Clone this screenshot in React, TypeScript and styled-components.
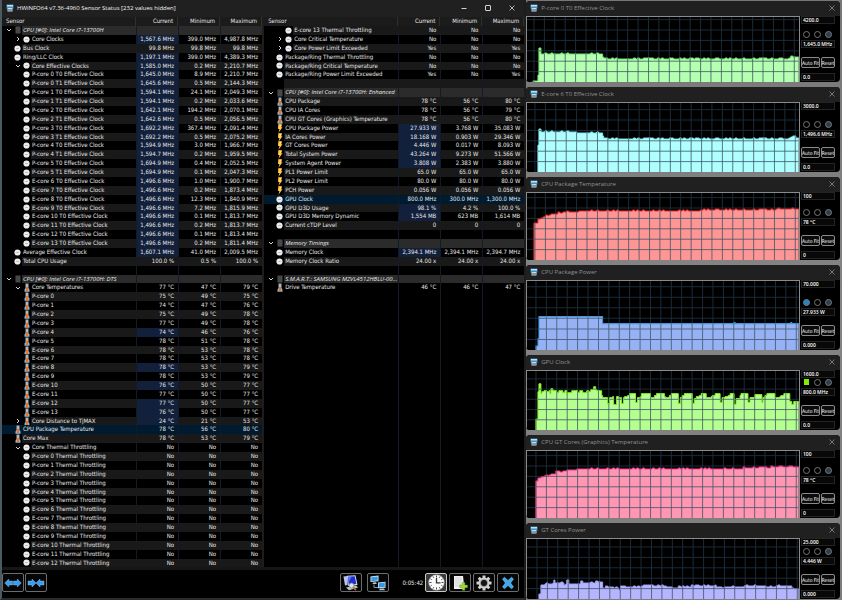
import React from "react";
import styled, { createGlobalStyle } from "styled-components";

const GlobalStyle = createGlobalStyle`
  * { box-sizing: border-box; }
  html, body { margin: 0; padding: 0; background: #4b565e; }
  body, button, input { font-family: "DejaVu Sans Condensed", "Liberation Sans", sans-serif; font-size: 6px; }
  button, input { margin: 0; }
`;

/* ---------- layout ---------- */

const Desktop = styled.main`
  display: grid;
  grid-template-columns: minmax(0, 5fr) minmax(0, 3fr);
  height: 100vh;
  min-height: 560px;
  background: #4b565e;
`;

const SensorWindow = styled.section`
  display: flex;
  flex-direction: column;
  min-width: 0;
  background: #000;
  border-left: 2px solid #4b5963;
  border-right: 2px solid #1c1c1c;
  border-bottom: 2px solid #292b2d;
`;

const TitleBar = styled.header`
  display: flex;
  align-items: center;
  flex: none;
  height: 17px;
  padding: 0 0 1px 4px;
  background: #202020;
  color: #f2f2f2;
`;

const Title = styled.h1<{ $dim?: boolean }>`
  flex: 1;
  margin: 0;
  padding-left: 3px;
  font-family: "Open Sans", "Noto Sans", sans-serif;
  font-size: 6px;
  font-weight: 400;
  line-height: 10px;
  white-space: nowrap;
  color: ${(p) => (p.$dim ? "#929292" : "#f4f4f4")};
`;

const CaptionButton = styled.button`
  display: flex;
  align-items: center;
  justify-content: center;
  width: 24px;
  height: 12px;
  padding: 0;
  border: 0;
  background: none;
  color: #d0d0d0;
`;

const Columns = styled.div`
  display: grid;
  grid-template-columns: minmax(0, 1fr) minmax(0, 1fr);
  column-gap: 2px;
  flex: 1;
  min-height: 0;
  background: #1d1d1d;
`;

/* ---------- sensor table ---------- */

const Table = styled.table`
  display: flex;
  flex-direction: column;
  min-width: 0;
  background: #000;
  color: #e8e8e8;
  font-size: 6px;
  line-height: 8px;
`;

const Head = styled.thead`
  display: block;
  flex: none;
  height: 9px;
  background: #1b1b1b;
`;

const Body = styled.tbody`
  display: flex;
  flex-direction: column;
  flex: 1;
  min-height: 0;
`;

const Row = styled.tr<{ $selected?: boolean; $span?: number }>`
  display: grid;
  grid-template-columns: minmax(0, 1fr) 42px 42px 42px;
  flex: ${(p) => p.$span ?? 1} 1 0;
  min-height: 0;
  background: ${(p) => (p.$selected ? "#001b30" : "#000")};
`;

type Tone = "plain" | "stripe" | "group" | "selected" | "changed";
const toneColor: Record<Tone, string> = {
  plain: "#000",
  stripe: "#191919",
  group: "#2b2b2b",
  selected: "#001b30",
  changed: "#13203b",
};

const HeadCell = styled.th<{ $first?: boolean }>`
  padding: 0 4px;
  font-weight: 400;
  line-height: 8px;
  text-align: ${(p) => (p.$first ? "left" : "right")};
  border-right: 1px solid #303030;
`;

const HeadRow = styled(Row)`
  height: 9px;
  background: #1b1b1b;
`;

const NameCell = styled.th<{ $depth: number }>`
  display: flex;
  min-width: 0;
  height: 100%;
  padding: 0 0 0 ${(p) => 2 + p.$depth * 9}px;
  font-weight: 400;
  text-align: left;
`;

const Slot = styled.span`
  display: flex;
  align-items: center;
  justify-content: center;
  flex: none;
  width: 9px;
`;

const Toggle = styled.button`
  display: flex;
  align-items: center;
  justify-content: center;
  width: 8px;
  height: 8px;
  padding: 0;
  border: 0;
  background: none;
  color: #d8d8d8;
`;

const Label = styled.span<{ $tone: Tone }>`
  flex: 1;
  min-width: 0;
  padding-left: 1px;
  white-space: nowrap;
  background: ${(p) => toneColor[p.$tone]};
`;

const GroupLabel = styled(Label)`
  font-family: "Open Sans", "Noto Sans", sans-serif;
  font-style: italic;
`;

const ValueCell = styled.td<{ $tone: Tone }>`
  padding: 0 4px 0 0;
  text-align: right;
  white-space: nowrap;
  border-left: 1px solid #121b26;
  background: ${(p) => toneColor[p.$tone]};
`;

/* ---------- toolbar ---------- */

const Toolbar = styled.footer`
  display: flex;
  align-items: center;
  flex: none;
  height: 31px;
  padding: 0 5px 3px 0;
  gap: 2px;
  border-top: 3px solid #161616;
`;

const ColumnTools = styled.div`
  display: flex;
  gap: 1px;
`;

const ToolButton = styled.button<{ $active?: boolean }>`
  display: flex;
  align-items: center;
  justify-content: center;
  width: 22px;
  height: 19px;
  padding: 0;
  border: 1px solid ${(p) => (p.$active ? "#c8c8c8" : "#6c6c6c")};
  border-radius: 2px;
  background: ${(p) => (p.$active ? "#3a3a3a" : "#060606")};
`;

const WindowTools = styled.div`
  display: flex;
  gap: 5px;
  margin-left: auto;
`;

const Elapsed = styled.time`
  width: 32px;
  text-align: right;
  color: #ececec;
`;

/* ---------- graph windows ---------- */

const GraphColumn = styled.aside`
  display: flex;
  flex-direction: column;
  gap: 5px;
  min-width: 0;
  padding: 1px 2px 1px 0;
  background: linear-gradient(#777 0, #858585 50%, #7d7d7d 100%);
`;

const GraphWindow = styled.section<{ $share: number }>`
  display: flex;
  flex-direction: column;
  flex: ${(p) => p.$share} 1 0;
  min-height: 0;
  border-radius: 4px;
  overflow: hidden;
  background: #000;
`;

const GraphTitle = styled.header`
  display: flex;
  align-items: center;
  flex: none;
  height: 15px;
  padding: 0 0 1px 4px;
  background: #202020;
`;

const GraphClose = styled(CaptionButton)`
  width: 16px;
  color: #8d8d8d;
`;

const GraphBody = styled.div`
  display: flex;
  flex: 1;
  min-height: 0;
`;

const Plot = styled.svg`
  display: block;
  flex: 1;
  min-width: 0;
  height: 100%;
  border: 1px solid #8a8a8a;
  border-width: 1px 1px 0 1px;
  background: #000;
`;

const Panel = styled.div`
  display: flex;
  flex-direction: column;
  flex: none;
  width: 40px;
  padding: 0 4px 1px 1px;
`;

const Field = styled.input`
  flex: none;
  width: 34px;
  height: 8px;
  padding: 0 1px;
  border: 1px solid #242424;
  border-radius: 0;
  background: #080808;
  color: #fff;
  font-family: "Open Sans", "Noto Sans", sans-serif;
  font-size: 5px;
  font-weight: 600;
  line-height: 6px;
`;

const Radios = styled.div`
  display: flex;
  gap: 4px;
  margin: auto 0 2px;
  padding-left: 2px;
  height: 7px;
`;

const Radio = styled.input<{ $fill: string; $square?: boolean }>`
  appearance: none;
  width: ${(p) => (p.$square ? 5 : 7)}px;
  height: ${(p) => (p.$square ? 6 : 7)}px;
  margin: 0 ${(p) => (p.$square ? 1 : 0)}px;
  border: 1px solid ${(p) => (p.$square ? p.$fill : "#777")};
  border-radius: ${(p) => (p.$square ? "0" : "50%")};
  background: ${(p) => p.$fill};
`;

const Actions = styled.div`
  display: flex;
  flex: none;
  gap: 1px;
  margin: 9px 0 5px;
`;

const Action = styled.button<{ $wide?: boolean }>`
  flex: none;
  display: flex;
  align-items: center;
  justify-content: center;
  width: ${(p) => (p.$wide ? 19 : 14)}px;
  height: 11px;
  padding: 0;
  border: 1px solid #8a8a8a;
  border-radius: 2px;
  background: #0c0c0c;
  color: #fff;
  font-size: 5px;
  line-height: 8px;
  white-space: nowrap;
`;

/* ---------- icons ---------- */

const AppIcon = () => (
  <svg width="8" height="8" viewBox="0 0 16 16" aria-hidden="true">
    <path d="M1 1h14v8H1z" fill="#3d8fc4" />
    <path d="M2 2h12v3H2z" fill="#bfe3f5" />
    <path d="M3 8h10v7H3z" fill="#c9dbe6" />
    <path d="M5 10h2v4H5zM9 10h2v4H9z" fill="#36586e" />
  </svg>
);

const CloseIcon = () => (
  <svg width="6" height="6" viewBox="0 0 6 6" stroke="currentColor" strokeWidth="0.8" aria-hidden="true">
    <path d="M0.5 0.5l5 5M5.5 0.5l-5 5" />
  </svg>
);

const Chevron = ({ open }: { open: boolean }) => (
  <svg width="6" height="6" viewBox="0 0 6 6" fill="none" stroke="currentColor" strokeWidth="1" aria-hidden="true">
    <path d={open ? "M1 2l2 2 2-2" : "M2 1l2 2-2 2"} />
  </svg>
);

type IconKind = "dial" | "temp" | "bolt" | "chip";

const SensorIcon = ({ kind }: { kind: IconKind }) => {
  if (kind === "temp")
    return (
      <svg width="6" height="9" viewBox="0 0 6 9" aria-hidden="true">
        <path d="M1.500 0.500h3v4.500l1 1.400v2.400H0.500V6.400l1-1.400z" fill="#8fb4cc" />
        <path d="M2.500 1.500h1v5h-1z" fill="#f6b48a" />
        <path d="M2 4h2v4h-2z" fill="#f2701c" />
      </svg>
    );
  if (kind === "bolt")
    return (
      <svg width="6" height="9" viewBox="0 0 6 9" aria-hidden="true">
        <path d="M1.200 0.300h4L4.300 3.300h1.200L1.500 8.800l0.900-3.900H1z" fill="#ffb52e" />
        <path d="M2.200 1h1.500L2.600 4.400l1 0.200" fill="none" stroke="#fff3b0" strokeWidth="0.800" />
      </svg>
    );
  if (kind === "chip")
    return (
      <svg width="6" height="8" viewBox="0 0 6 8" aria-hidden="true">
        <rect x="0.500" y="0.500" width="5" height="7" fill="#4c4c4c" />
        <path d="M0.500 2h5M0.500 4h5M0.500 6h5" stroke="#3a3a3a" strokeWidth="0.500" />
      </svg>
    );
  return (
    <svg width="7" height="7" viewBox="0 0 7 7" aria-hidden="true">
      <circle cx="3.500" cy="3.500" r="3.100" fill="#ededed" />
      <path d="M2.200 3.500h2.600" stroke="#a4a4a4" strokeWidth="0.700" />
    </svg>
  );
};

const ExpandIcon = ({ inward }: { inward?: boolean }) => (
  <svg width="18" height="10" viewBox="0 0 18 10" fill="#3b9df0" stroke="#9bd0ff" strokeWidth="0.400" aria-hidden="true">
    {inward ? (
      <path d="M9 5L5 1v2H1v4h4v2zM9 5l4-4v2h4v4h-4v2z" />
    ) : (
      <path d="M0.700 5l4-4v2h3.800v4H4.700v2zM17.300 5l-4-4v2H9.500v4h3.800v2z" />
    )}
  </svg>
);

const MonitorIcon = () => (
  <svg width="16" height="16" viewBox="0 0 16 16" aria-hidden="true">
    <path d="M0.500 1.500l4-0.500v9l-2.500 0.500z" fill="#b9c3f2" />
    <path d="M4 0.800l8.500-0.500 2 9.700-9.500 1z" fill="#d7dcf2" />
    <path d="M5 1.800l6.700-0.500 1.600 7.700-7.600 0.800z" fill="#1d2fd0" />
    <path d="M5 1.800l3.500-0.300L6 7z" fill="#5a7bf5" />
    <path d="M3 12.500l10-2 2 2-9 2.800z" fill="#c4c8cc" />
    <circle cx="8.500" cy="10.500" r="2.500" fill="#d6e6f2" stroke="#8a7a68" strokeWidth="0.700" />
    <path d="M10.200 12.400l2.800 2.800" stroke="#a8703c" strokeWidth="1.700" />
  </svg>
);

const NetworkIcon = () => (
  <svg width="16" height="16" viewBox="0 0 16 16" aria-hidden="true">
    <path d="M0.500 1.500l8-1v5.800l-8 0.700z" fill="#dcebf5" />
    <path d="M1.300 2.200l6.400-0.800v4.200l-6.400 0.600z" fill="#2f9ae8" />
    <path d="M3 7.500l3-0.300 0.800 1.800H2.500z" fill="#b8c4cc" />
    <path d="M4 9.500v3h4" fill="none" stroke="#8fa3b0" strokeWidth="0.900" />
    <path d="M8 7.500l7.500-0.800v6l-7.500 0.600z" fill="#dcebf5" />
    <path d="M8.700 8.200l6.100-0.700v4.400l-6.100 0.500z" fill="#2f9ae8" />
    <path d="M10 13.500h4l1 1.800H9z" fill="#b8c4cc" />
  </svg>
);

const ClockIcon = () => (
  <svg width="17" height="17" viewBox="0 0 17 17" aria-hidden="true">
    <circle cx="8.500" cy="8.500" r="7.800" fill="#fafafa" stroke="#b0b0b0" strokeWidth="0.500" />
    <g stroke="#333" strokeWidth="0.900">
      <path d="M8.500 1.500v2M8.500 13.500v2M1.500 8.500h2M13.500 8.500h2M5 2.500l0.800 1.300M12 2.500l-0.800 1.300M5 14.500l0.800-1.300M12 14.500l-0.800-1.300M2.500 5l1.200 0.700M14.500 5l-1.200 0.700M2.500 12l1.200-0.700M14.500 12l-1.200-0.700" />
      <path d="M8.500 4v4.800h4" fill="none" strokeWidth="1.300" />
    </g>
  </svg>
);

const LogIcon = () => (
  <svg width="16" height="16" viewBox="0 0 16 16" aria-hidden="true">
    <path d="M2 1h9l1.500 13H2z" fill="#f2f2f2" />
    <path d="M3 3h7M3 5h7M3 7h7M3 9h7M3 11h7" stroke="#b8b8b8" strokeWidth="0.600" />
    <path d="M10.300 7.500h2.600v2.600h2.600v2.600h-2.600v2.600h-2.600v-2.600H7.700v-2.600h2.600z" fill="#9ed63c" stroke="#5b8f1a" strokeWidth="0.400" />
  </svg>
);

const GearIcon = () => (
  <svg width="16" height="16" viewBox="0 0 16 16" aria-hidden="true">
    <g stroke="#d2d2d2" strokeWidth="3">
      <path d="M8 0.500v15M0.500 8h15M2.700 2.700l10.600 10.600M13.300 2.700L2.700 13.300" />
    </g>
    <circle cx="8" cy="8" r="5.500" fill="#d2d2d2" />
    <circle cx="8" cy="8" r="3.200" fill="#151515" />
    <circle cx="8" cy="8" r="3.700" fill="none" stroke="#8f8f8f" strokeWidth="0.700" />
  </svg>
);

const QuitIcon = () => (
  <svg width="14" height="14" viewBox="0 0 14 14" aria-hidden="true">
    <path d="M1.500 3l2-1.700L7 4.500l3.500-3.200 2 1.700L9.600 7l2.900 4-2 1.700L7 9.500l-3.500 3.200-2-1.700L4.400 7z" fill="#3fa9ea" stroke="#93d3fb" strokeWidth="0.500" />
  </svg>
);

/* ---------- sensor data ---------- */

interface Sensor {
  name: string;
  icon?: IconKind;
  depth?: number;
  fold?: "open" | "closed";
  group?: boolean;
  selected?: boolean;
  changed?: boolean;
  values?: string[];
}

const group = (name: string): Sensor => ({ name, icon: "chip", fold: "open", group: true });
const blank: Sensor = { name: "" };
const reading = (name: string, icon: IconKind, values: string, unit: string, extra: Partial<Sensor> = {}): Sensor => ({
  name,
  icon,
  values: values.split(" ").map((v) => (unit ? `${v} ${unit}` : v)),
  ...extra,
});

const effective = (
  [
    ["P-core 0 T0", "1,645.0 8.9 2,210.7"],
    ["P-core 0 T1", "1,645.6 0.5 2,144.3"],
    ["P-core 1 T0", "1,594.1 24.1 2,049.3"],
    ["P-core 1 T1", "1,594.1 0.2 2,033.6"],
    ["P-core 2 T0", "1,642.1 194.2 2,070.1"],
    ["P-core 2 T1", "1,642.6 0.5 2,056.5"],
    ["P-core 3 T0", "1,692.2 367.4 2,091.4"],
    ["P-core 3 T1", "1,692.2 0.5 2,075.2"],
    ["P-core 4 T0", "1,594.9 3.0 1,966.7"],
    ["P-core 4 T1", "1,594.7 0.2 1,959.5"],
    ["P-core 5 T0", "1,694.9 0.4 2,052.5"],
    ["P-core 5 T1", "1,694.9 0.1 2,047.3"],
    ["E-core 6 T0", "1,496.6 1.0 1,900.7"],
    ["E-core 7 T0", "1,496.6 0.2 1,873.4"],
    ["E-core 8 T0", "1,496.6 12.3 1,840.9"],
    ["E-core 9 T0", "1,496.6 7.2 1,815.9"],
    ["E-core 10 T0", "1,496.6 0.1 1,813.7"],
    ["E-core 11 T0", "1,496.6 0.2 1,813.7"],
    ["E-core 12 T0", "1,496.6 0.1 1,813.4"],
    ["E-core 13 T0", "1,496.6 0.2 1,811.4"],
  ] as const
).map(([core, v]) => reading(`${core} Effective Clock`, "dial", v, "MHz", { depth: 1, changed: true }));

const temperatures = (
  [
    ["P-core 0", "75 49 75"],
    ["P-core 1", "74 47 76"],
    ["P-core 2", "75 49 78"],
    ["P-core 3", "77 49 78"],
    ["P-core 4", "74 46 76", true],
    ["P-core 5", "78 51 78"],
    ["E-core 6", "78 53 78"],
    ["E-core 7", "78 53 78"],
    ["E-core 8", "78 53 79", true],
    ["E-core 9", "78 53 79"],
    ["E-core 10", "76 50 77", true],
    ["E-core 11", "77 50 77"],
    ["E-core 12", "77 50 77", true],
    ["E-core 13", "76 50 77", true],
  ] as [string, string, boolean?][]
).map(([core, v, changed]) => reading(core, "temp", v, "°C", { depth: 1, changed }));

const throttling = Array.from({ length: 13 }, (_, i) =>
  reading(`${i < 6 ? "P" : "E"}-core ${i} Thermal Throttling`, "dial", "No No No", "", { depth: 1 })
);

const leftSensors: Sensor[] = [
  group("CPU [#0]: Intel Core i7-13700H"),
  reading("Core Clocks", "dial", "1,567.6 399.0 4,987.8", "MHz", { depth: 1, fold: "closed", changed: true }),
  reading("Bus Clock", "dial", "99.8 99.8 99.8", "MHz"),
  reading("Ring/LLC Clock", "dial", "1,197.1 399.0 4,389.3", "MHz", { changed: true }),
  reading("Core Effective Clocks", "dial", "1,585.0 0.2 2,210.7", "MHz", { depth: 1, fold: "open", changed: true }),
  ...effective,
  reading("Average Effective Clock", "dial", "1,607.1 41.0 2,009.5", "MHz", { changed: true }),
  reading("Total CPU Usage", "dial", "100.0 0.5 100.0", "%"),
  blank,
  group("CPU [#0]: Intel Core i7-13700H: DTS"),
  reading("Core Temperatures", "temp", "77 47 79", "°C", { depth: 1, fold: "open" }),
  ...temperatures,
  reading("Core Distance to TjMAX", "temp", "24 21 53", "°C", { depth: 1, fold: "closed", changed: true }),
  reading("CPU Package Temperature", "temp", "78 56 80", "°C", { selected: true }),
  reading("Core Max", "temp", "78 53 79", "°C"),
  reading("Core Thermal Throttling", "dial", "No No No", "", { depth: 1, fold: "open" }),
  ...throttling,
];

const rightSensors: Sensor[] = [
  reading("E-core 13 Thermal Throttling", "dial", "No No No", "", { depth: 1 }),
  reading("Core Critical Temperature", "dial", "No No No", "", { depth: 1, fold: "closed" }),
  reading("Core Power Limit Exceeded", "dial", "Yes No Yes", "", { depth: 1, fold: "closed" }),
  reading("Package/Ring Thermal Throttling", "dial", "No No No", ""),
  reading("Package/Ring Critical Temperature", "dial", "No No No", ""),
  reading("Package/Ring Power Limit Exceeded", "dial", "Yes No Yes", ""),
  blank,
  group("CPU [#0]: Intel Core i7-13700H: Enhanced"),
  reading("CPU Package", "temp", "78 56 80", "°C"),
  reading("CPU IA Cores", "temp", "78 56 79", "°C"),
  reading("CPU GT Cores (Graphics) Temperature", "temp", "78 56 80", "°C"),
  reading("CPU Package Power", "bolt", "27.933 3.768 35.083", "W", { changed: true }),
  reading("IA Cores Power", "bolt", "18.168 0.903 29.346", "W", { changed: true }),
  reading("GT Cores Power", "bolt", "4.446 0.017 8.093", "W", { changed: true }),
  reading("Total System Power", "bolt", "43.264 9.273 51.566", "W", { changed: true }),
  reading("System Agent Power", "bolt", "3.808 2.383 3.880", "W", { changed: true }),
  reading("PL1 Power Limit", "bolt", "65.0 65.0 65.0", "W"),
  reading("PL2 Power Limit", "bolt", "80.0 80.0 80.0", "W"),
  reading("PCH Power", "bolt", "0.056 0.056 0.056", "W"),
  reading("GPU Clock", "dial", "800.0 300.0 1,300.0", "MHz", { selected: true }),
  reading("GPU D3D Usage", "dial", "98.1 4.2 100.0", "%", { changed: true }),
  reading("GPU D3D Memory Dynamic", "dial", "1,554 623 1,614", "MB", { changed: true }),
  reading("Current cTDP Level", "dial", "0 0 0", ""),
  blank,
  group("Memory Timings"),
  reading("Memory Clock", "dial", "2,394.1 2,394.1 2,394.7", "MHz", { changed: true }),
  reading("Memory Clock Ratio", "dial", "24.00 24.00 24.00", "x"),
  blank,
  group("S.M.A.R.T.: SAMSUNG MZVL4512HBLU-00..."),
  reading("Drive Temperature", "temp", "46 46 47", "°C"),
];

const SensorTable = ({ sensors, rows, label }: { sensors: Sensor[]; rows: number; label: string }) => (
  <Table aria-label={label}>
    <Head>
      <HeadRow>
        <HeadCell $first>Sensor</HeadCell>
        <HeadCell>Current</HeadCell>
        <HeadCell>Minimum</HeadCell>
        <HeadCell>Maximum</HeadCell>
      </HeadRow>
    </Head>
    <Body>
      {sensors.map((s, i) => {
        const tone: Tone = s.selected ? "selected" : s.group ? "group" : i % 2 === 0 ? "stripe" : "plain";
        const values = s.values ?? ["", "", ""];
        const Name = s.group ? GroupLabel : Label;
        return (
          <Row key={i} $selected={s.selected}>
            <NameCell $depth={s.depth ?? 0} scope="row">
              <Slot>
                {s.fold && (
                  <Toggle aria-label={`Toggle ${s.name}`} aria-expanded={s.fold === "open"}>
                    <Chevron open={s.fold === "open"} />
                  </Toggle>
                )}
              </Slot>
              <Slot>{s.icon && <SensorIcon kind={s.icon} />}</Slot>
              <Name $tone={tone}>{s.name}</Name>
            </NameCell>
            {values.map((v, c) => (
              <ValueCell key={c} $tone={c === 0 && s.changed ? "changed" : tone}>
                {v}
              </ValueCell>
            ))}
          </Row>
        );
      })}
      {rows > sensors.length && (
        <Row $span={rows - sensors.length}>
          <NameCell $depth={0} />
          <ValueCell $tone="plain" />
          <ValueCell $tone="plain" />
          <ValueCell $tone="plain" />
        </Row>
      )}
    </Body>
  </Table>
);

/* ---------- graph data ---------- */

interface Graph {
  title: string;
  share: number;
  height: number;
  max: string;
  now: string;
  min: string;
  fill: string;
  edge: string;
  offset: number;
  bumps: number;
  swatch?: string;
  square?: boolean;
  steps: [number, number][];
}

const PLOT_WIDTH = 273;

const graphs: Graph[] = [
  {
    title: "P-core 0 T0 Effective Clock", share: 81, height: 65, max: "4200.0", now: "1,645.0 MHz", min: "0.0",
    fill: "#b4ffb0", edge: "#6fe86c", offset: 7, bumps: 1,
    steps: [[6, 1], [11, 7], [12, 34], [14, 28], [76, 25], [77, 23], [265, 25]],
  },
  {
    title: "E-core 6 T0 Effective Clock", share: 85, height: 69, max: "3000.0", now: "1,496.6 MHz", min: "0.0",
    fill: "#b0ffff", edge: "#7fe6ea", offset: 8, bumps: 1,
    steps: [[11, 27], [12, 43], [14, 40], [50, 39], [76, 36], [77, 33], [265, 34], [267, 36], [270, 34]],
  },
  {
    title: "CPU Package Temperature", share: 83, height: 67, max: "100", now: "78 °C", min: "0",
    fill: "#ff9696", edge: "#f02a2a", offset: 8, bumps: 1,
    steps: [[7, 37], [11, 41], [14, 42], [16, 43], [19, 44], [22, 45], [26, 46], [31, 47], [36, 48], [52, 49], [175, 50], [250, 51]],
  },
  {
    title: "CPU Package Power", share: 85, height: 68, max: "70.000", now: "27.933 W", min: "0.000",
    fill: "#96b2f5", edge: "#3f97dc", offset: 9, bumps: 0, swatch: "#1b87cc",
    steps: [[9, 4], [11, 11], [12, 33], [76, 26], [208, 27], [209, 26], [265, 27], [266, 26]],
  },
  {
    title: "GPU Clock", share: 75, height: 60, max: "1600.0", now: "800.0 MHz", min: "0.0",
    fill: "#b4ff90", edge: "#86f41c", offset: 9, bumps: 0, swatch: "#7ff000", square: true,
    steps: [
      [9, 11], [11, 39], [12, 47], [14, 37], [15, 39], [17, 40], [20, 39], [22, 40], [23, 37], [24, 42], [26, 40], [30, 38], [32, 40],
      [36, 38], [38, 40], [40, 36], [41, 38], [45, 40], [51, 38], [53, 40], [56, 38], [60, 40], [62, 39], [64, 41], [67, 44], [69, 41],
      [70, 40], [75, 35], [76, 33], [81, 27], [83, 33], [86, 34], [87, 26], [90, 34], [92, 33], [95, 27], [97, 33], [98, 34], [101, 35],
      [103, 37], [109, 28], [111, 33], [114, 34], [115, 37], [124, 33], [128, 35], [130, 37], [138, 34], [139, 33], [143, 35], [145, 37],
      [152, 27], [154, 33], [156, 35], [158, 37], [166, 27], [168, 32], [170, 34], [173, 35], [175, 37], [180, 33], [185, 34], [186, 35],
      [189, 37], [194, 28], [196, 33], [199, 34], [202, 35], [204, 37], [208, 26], [210, 32], [214, 35], [215, 37], [222, 28], [224, 33],
      [229, 36], [236, 28], [237, 33], [239, 35], [241, 37], [249, 33], [254, 34], [255, 35], [258, 37], [264, 29], [266, 26], [268, 29],
    ],
  },
  {
    title: "CPU GT Cores (Graphics) Temperature", share: 83, height: 67, max: "100", now: "78 °C", min: "0",
    fill: "#ff96b4", edge: "#ff3b90", offset: 9, bumps: 1,
    steps: [[9, 37], [11, 40], [14, 41], [17, 42], [22, 43], [26, 44], [29, 46], [36, 47], [42, 48], [50, 49], [170, 49], [217, 50], [245, 51]],
  },
  {
    title: "GT Cores Power", share: 76, height: 60, max: "25.000", now: "4.446 W", min: "0.000",
    fill: "#b4b4ff", edge: "#a4a4fa", offset: 10, bumps: 1,
    steps: [
      [12, 5], [14, 14], [19, 15], [26, 16], [27, 18], [28, 16], [37, 14], [40, 18], [42, 15], [54, 18], [56, 16], [69, 18], [71, 16],
      [76, 11], [79, 12], [85, 11], [92, 9], [94, 13], [99, 12], [115, 13], [140, 12], [146, 11], [152, 12], [165, 13], [190, 12],
      [196, 11], [200, 12], [218, 13], [240, 12], [250, 13], [266, 10],
    ],
  },
];

const outline = ({ steps, height, bumps }: Graph) => {
  let d = `M${steps[0][0]} ${height}`;
  steps.forEach(([x, h], i) => {
    const end = i + 1 < steps.length ? steps[i + 1][0] : PLOT_WIDTH;
    for (let at = x; at < end; at += 2) {
      const noisy = bumps > 0 && at > 16 && (at * 7 + ((at * at) % 23) * 5) % 19 < 5;
      d += `V${height - h - (noisy ? bumps : 0)}H${Math.min(at + 2, end)}`;
    }
  });
  return d;
};

const gridLines = ({ offset, height }: Graph) => {
  let d = "";
  for (let k = 0; offset + k * 10.46 < PLOT_WIDTH; k++) d += `M${(offset + k * 10.46).toFixed(1)} 0V${height}`;
  for (let k = 1; height - k * 10.4 > 0; k++) d += `M0 ${(height - k * 10.4).toFixed(1)}H${PLOT_WIDTH}`;
  return d;
};

const GraphView = ({ graph }: { graph: Graph }) => {
  const line = outline(graph);
  const grid = gridLines(graph);
  const clip = `area-${graph.title.replace(/\W/g, "")}`;
  return (
    <GraphWindow $share={graph.share} aria-label={graph.title}>
      <GraphTitle>
        <AppIcon />
        <Title as="h2" $dim>
          {graph.title}
        </Title>
        <GraphClose aria-label="Close graph">
          <CloseIcon />
        </GraphClose>
      </GraphTitle>
      <GraphBody>
        <Plot viewBox={`0 0 ${PLOT_WIDTH} ${graph.height}`} preserveAspectRatio="none" role="img" aria-label={`${graph.title} graph`}>
          <clipPath id={clip}>
            <path d={`${line}V${graph.height}Z`} />
          </clipPath>
          <path d={grid} stroke="#1b2b38" fill="none" />
          <path d={`${line}V${graph.height}Z`} fill={graph.fill} />
          <path d={line} fill="none" stroke={graph.edge} />
          <path d={grid} clipPath={`url(#${clip})`} stroke="#3f5566" strokeOpacity="0.8" fill="none" />
        </Plot>
        <Panel>
          <Field aria-label="Scale maximum" defaultValue={graph.max} />
          <Radios role="radiogroup" aria-label="Graph options">
            <Radio type="radio" name={graph.title} aria-label="Colour" $fill={graph.swatch ?? "#000"} $square={graph.square} />
            <Radio type="radio" name={graph.title} aria-label="Grid" $fill="#000" />
            <Radio type="radio" name={graph.title} aria-label="Background" $fill="#2c3f50" />
          </Radios>
          <Field aria-label="Current value" readOnly value={graph.now} />
          <Actions>
            <Action $wide>Auto Fit</Action>
            <Action>Reset</Action>
          </Actions>
          <Field aria-label="Scale minimum" defaultValue={graph.min} />
        </Panel>
      </GraphBody>
    </GraphWindow>
  );
};

export default function App() {
  return (
    <>
      <GlobalStyle />
      <Desktop>
        <SensorWindow>
          <TitleBar>
            <AppIcon />
            <Title>HWiNFO64 v7.36-4960 Sensor Status [232 values hidden]</Title>
            <CaptionButton aria-label="Minimize">
              <svg width="6" height="6" viewBox="0 0 6 6" stroke="currentColor">
                <path d="M0.500 3.500h5" />
              </svg>
            </CaptionButton>
            <CaptionButton aria-label="Maximize">
              <svg width="6" height="6" viewBox="0 0 6 6" fill="none" stroke="currentColor">
                <rect x="0.500" y="0.500" width="5" height="5" rx="0.500" />
              </svg>
            </CaptionButton>
            <CaptionButton aria-label="Close">
              <CloseIcon />
            </CaptionButton>
          </TitleBar>
          <Columns>
            <SensorTable label="Processor sensors" sensors={leftSensors} rows={61} />
            <SensorTable label="Package and memory sensors" sensors={rightSensors} rows={61} />
          </Columns>
          <Toolbar>
            <ColumnTools>
              <ToolButton aria-label="Expand columns">
                <ExpandIcon />
              </ToolButton>
              <ToolButton aria-label="Shrink columns">
                <ExpandIcon inward />
              </ToolButton>
            </ColumnTools>
            <WindowTools>
              <ToolButton aria-label="System summary">
                <MonitorIcon />
              </ToolButton>
              <ToolButton aria-label="Remote monitoring">
                <NetworkIcon />
              </ToolButton>
            </WindowTools>
            <Elapsed>0:05:42</Elapsed>
            <ToolButton aria-label="Reset clock" $active>
              <ClockIcon />
            </ToolButton>
            <ToolButton aria-label="Start logging">
              <LogIcon />
            </ToolButton>
            <ToolButton aria-label="Settings">
              <GearIcon />
            </ToolButton>
            <ToolButton aria-label="Close sensors">
              <QuitIcon />
            </ToolButton>
          </Toolbar>
        </SensorWindow>
        <GraphColumn>
          {graphs.map((g) => (
            <GraphView key={g.title} graph={g} />
          ))}
        </GraphColumn>
      </Desktop>
    </>
  );
}
